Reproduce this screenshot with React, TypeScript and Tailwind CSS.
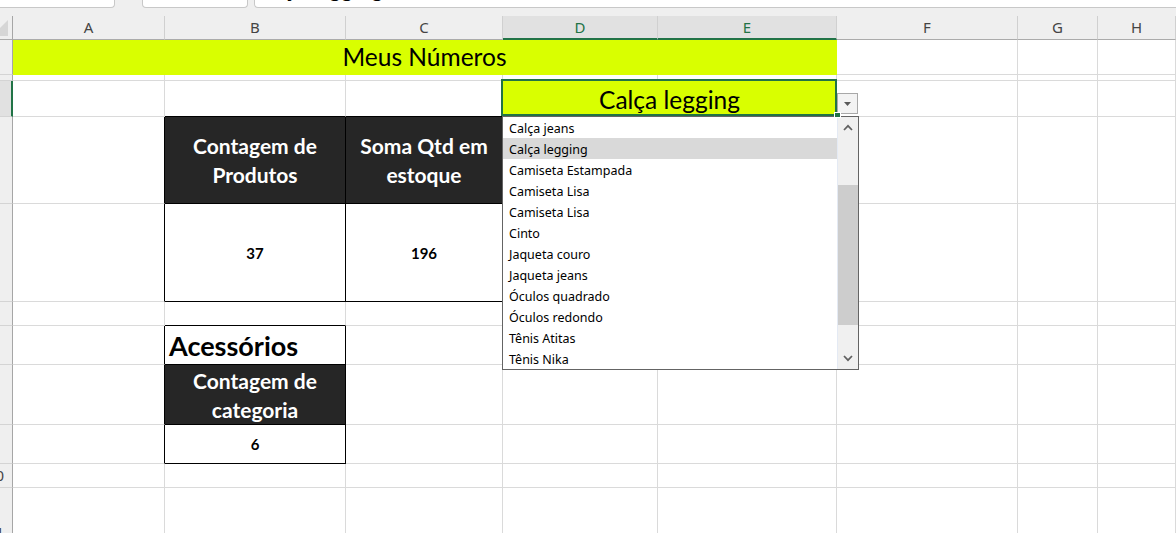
import React from 'react';

type S = 'g' | 'k' | 'y';
const rcls = (s: S) => (s === 'k' ? 'border-r-black' : s === 'y' ? 'border-r-[#d9ff00]' : 'border-r-[#dadada]');
const bcls = (s: S) => (s === 'k' ? 'border-b-black' : s === 'y' ? 'border-b-[#d9ff00]' : 'border-b-[#dadada]');

function Cell({ r = 'g', b = 'g', className = '', children }: { r?: S; b?: S; className?: string; children?: React.ReactNode }) {
  return <div className={`border-r border-b ${rcls(r)} ${bcls(b)} ${className}`}>{children}</div>;
}

function RowHead({ sel, label }: { sel?: boolean; label?: string }) {
  return (
    <div
      className={`flex items-center justify-end overflow-hidden whitespace-nowrap pr-[8px] border-b border-b-[#d4d4d4] text-[15px] text-[#444] [font-family:'Noto_Sans',sans-serif] ${
        sel ? 'bg-[#e1e1e1] border-r-2 border-r-[#217346]' : 'bg-[#efefef] border-r border-r-[#a6a6a6]'
      }`}
    >
      {label}
    </div>
  );
}

function ColHead({ label, sel }: { label: string; sel?: boolean }) {
  return (
    <div
      className={`flex items-center justify-center text-[15px] [font-family:'Noto_Sans',sans-serif] border-r border-r-[#d0d0d0] ${
        sel ? 'bg-[#e1e1e1] text-[#217346] border-b-2 border-b-[#217346]' : 'bg-[#efefef] text-[#444] border-b border-b-[#ababab]'
      }`}
    >
      {label}
    </div>
  );
}

const items = [
  'Calça jeans',
  'Calça legging',
  'Camiseta Estampada',
  'Camiseta Lisa',
  'Camiseta Lisa',
  'Cinto',
  'Jaqueta couro',
  'Jaqueta jeans',
  'Óculos quadrado',
  'Óculos redondo',
  'Tênis Atitas',
  'Tênis Nika',
];

function Chevron({ up }: { up?: boolean }) {
  return (
    <svg width="10" height="7" viewBox="0 0 10 7">
      <path d={up ? 'M1 6 L5 1.8 L9 6' : 'M1 1 L5 5.2 L9 1'} fill="none" stroke="#606060" strokeWidth="1.7" />
    </svg>
  );
}

function Blank({ n }: { n: number }) {
  return (
    <>
      {Array.from({ length: n }).map((_, i) => (
        <Cell key={i} />
      ))}
    </>
  );
}

export default function App() {
  return (
    <div className="w-[1176px] h-[533px] overflow-hidden bg-white [font-family:Lato,sans-serif] text-black">
      {/* formula bar remnant */}
      <div className="h-[16px] bg-[#efefef]">
        <div className="flex h-[8px]">
          <div className="w-[115px] bg-white border-b border-r border-[#c8c8c8] rounded-br-[4px]" />
          <div className="ml-[27px] w-[106px] bg-white border-b border-l border-r border-[#c8c8c8] rounded-b-[4px]" />
          <div className="ml-[6px] flex-1 bg-white border-b border-l border-[#c8c8c8] rounded-bl-[4px] overflow-hidden">
            <div className="-mt-[23px] -ml-[4px] text-[23px] leading-none whitespace-nowrap">Calça legging</div>
          </div>
        </div>
      </div>

      <div className="grid grid-cols-[13px_152px_181px_157px_155px_179px_181px_80px_1fr] grid-rows-[24px_35px_6px_36px_87px_98px_24px_39px_60px_39px_24px_90px]">
        {/* header */}
        <div className="relative bg-[#efefef] border-r border-r-[#a6a6a6] border-b border-b-[#ababab]">
          <svg className="absolute left-0 top-0" width="12" height="23" viewBox="0 0 12 23">
            <polygon points="8,4 8,20 0,20 0,12" fill="#d6d6d6" />
          </svg>
        </div>
        <ColHead label="A" />
        <ColHead label="B" />
        <ColHead label="C" />
        <ColHead label="D" sel />
        <ColHead label="E" sel />
        <ColHead label="F" />
        <ColHead label="G" />
        <ColHead label="H" />

        {/* row 1 */}
        <RowHead />
        <Cell r="y" b="y" className="col-span-5 bg-[#d9ff00] flex items-center justify-center text-[24.5px]">
          Meus Números
        </Cell>
        <Blank n={3} />

        {/* row 2 */}
        <RowHead />
        <Blank n={8} />

        {/* row 3 */}
        <RowHead sel />
        <Cell />
        <Cell b="k" />
        <Cell b="k" />
        <Cell r="y" b="y" className="col-span-2 relative bg-[#d9ff00] flex items-center justify-center pt-[3px] text-[24.5px]">
          Calça legging
          <div className="absolute left-[-2px] top-[-2px] right-[-1px] bottom-0 border-2 border-[#217346] z-10 pointer-events-none" />
          <div className="absolute left-[331px] top-[31px] w-[7px] h-[6px] bg-[#217346] border border-white z-30" />
          <div className="absolute left-[334px] top-[12px] w-[21px] h-[21px] bg-[#f3f3f3] border border-[#a8a8a8] flex items-center justify-center z-10">
            <svg width="7" height="4" viewBox="0 0 7 4">
              <path d="M0 0 H7 L3.5 4 Z" fill="#5a5a5a" />
            </svg>
          </div>
          {/* dropdown list */}
          <div className="absolute left-[-1px] top-[35px] w-[357px] h-[254px] border border-[#646464] bg-white flex z-20 [font-family:'Noto_Sans',sans-serif] text-[12.5px] text-black">
            <div className="w-[334px] flex flex-col">
              {items.map((t, i) => (
                <div key={i} className={`h-[21px] shrink-0 flex items-center pl-[6px] pt-[4px] whitespace-nowrap ${i === 1 ? 'bg-[#d9d9d9]' : ''}`}>
                  {t}
                </div>
              ))}
            </div>
            <div className="w-px bg-[#e4eaf4]" />
            <div className="w-[20px] bg-[#f0f0f0] flex flex-col">
              <div className="h-[21px] flex items-center justify-center">
                <Chevron up />
              </div>
              <div className="h-[47px]" />
              <div className="h-[140px] bg-[#cdcdcd]" />
              <div className="flex-1" />
              <div className="h-[21px] flex items-center justify-center">
                <Chevron />
              </div>
            </div>
          </div>
        </Cell>
        <Blank n={3} />

        {/* row 4 */}
        <RowHead />
        <Cell r="k" />
        <Cell r="k" b="k" className="bg-[#262626] text-white font-bold text-[21px] leading-[29px] flex items-center justify-center text-center">
          Contagem de
          <br />
          Produtos
        </Cell>
        <Cell r="k" b="k" className="bg-[#262626] text-white font-bold text-[21px] leading-[29px] flex items-center justify-center text-center">
          Soma Qtd em
          <br />
          estoque
        </Cell>
        <Blank n={5} />

        {/* row 5 */}
        <RowHead />
        <Cell r="k" />
        <Cell r="k" b="k" className="flex items-center justify-center pt-[2px] font-bold text-[15px]">
          37
        </Cell>
        <Cell r="k" b="k" className="flex items-center justify-center pt-[2px] font-bold text-[15px]">
          196
        </Cell>
        <Blank n={5} />

        {/* row 6 */}
        <RowHead />
        <Cell />
        <Cell b="k" />
        <Blank n={6} />

        {/* row 7 */}
        <RowHead />
        <Cell r="k" />
        <Cell r="k" b="k" className="flex items-center pl-[4px] pt-[2px] font-bold text-[27px] whitespace-nowrap">
          Acessórios
        </Cell>
        <Blank n={6} />

        {/* row 8 */}
        <RowHead />
        <Cell r="k" />
        <Cell r="k" b="k" className="bg-[#262626] text-white font-bold text-[21px] leading-[29px] flex items-center justify-center text-center">
          Contagem de
          <br />
          categoria
        </Cell>
        <Blank n={6} />

        {/* row 9 */}
        <RowHead />
        <Cell r="k" />
        <Cell r="k" b="k" className="flex items-center justify-center font-bold text-[15px]">
          6
        </Cell>
        <Blank n={6} />

        {/* row 10 */}
        <RowHead label="10" />
        <Blank n={8} />

        {/* row 11 */}
        <RowHead label="11" />
        <Blank n={8} />
      </div>
    </div>
  );
}
